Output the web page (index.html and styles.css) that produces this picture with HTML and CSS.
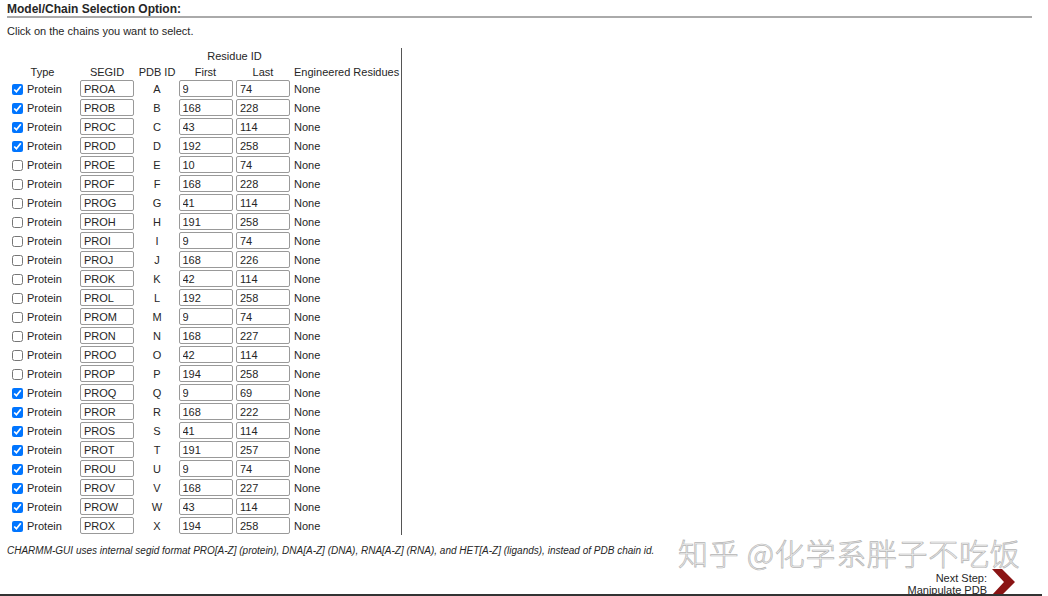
FILE: index.html
```html
<!DOCTYPE html>
<html>
<head>
<meta charset="utf-8">
<link rel="stylesheet" href="styles.css">
</head>
<body>
<div class="page">
  <h2 class="title">Model/Chain Selection Option:</h2>
  <p class="intro">Click on the chains you want to select.</p>
  <table class="chains">
    <colgroup>
      <col class="c-type"><col class="c-seg"><col class="c-pdb"><col class="c-first"><col class="c-last"><col class="c-eng">
    </colgroup>
    <thead>
      <tr class="h1"><th></th><th></th><th></th><th colspan="2">Residue ID</th><th></th></tr>
      <tr class="h2"><th>Type</th><th>SEGID</th><th>PDB ID</th><th>First</th><th>Last</th><th class="left">Engineered Residues</th></tr>
    </thead>
    <tbody>
      <tr><td class="type"><input type="checkbox" checked><span>Protein</span></td><td><input class="txt" value="PROA"></td><td class="pdb">A</td><td><input class="txt" value="9"></td><td><input class="txt" value="74"></td><td class="eng">None</td></tr>
      <tr><td class="type"><input type="checkbox" checked><span>Protein</span></td><td><input class="txt" value="PROB"></td><td class="pdb">B</td><td><input class="txt" value="168"></td><td><input class="txt" value="228"></td><td class="eng">None</td></tr>
      <tr><td class="type"><input type="checkbox" checked><span>Protein</span></td><td><input class="txt" value="PROC"></td><td class="pdb">C</td><td><input class="txt" value="43"></td><td><input class="txt" value="114"></td><td class="eng">None</td></tr>
      <tr><td class="type"><input type="checkbox" checked><span>Protein</span></td><td><input class="txt" value="PROD"></td><td class="pdb">D</td><td><input class="txt" value="192"></td><td><input class="txt" value="258"></td><td class="eng">None</td></tr>
      <tr><td class="type"><input type="checkbox"><span>Protein</span></td><td><input class="txt" value="PROE"></td><td class="pdb">E</td><td><input class="txt" value="10"></td><td><input class="txt" value="74"></td><td class="eng">None</td></tr>
      <tr><td class="type"><input type="checkbox"><span>Protein</span></td><td><input class="txt" value="PROF"></td><td class="pdb">F</td><td><input class="txt" value="168"></td><td><input class="txt" value="228"></td><td class="eng">None</td></tr>
      <tr><td class="type"><input type="checkbox"><span>Protein</span></td><td><input class="txt" value="PROG"></td><td class="pdb">G</td><td><input class="txt" value="41"></td><td><input class="txt" value="114"></td><td class="eng">None</td></tr>
      <tr><td class="type"><input type="checkbox"><span>Protein</span></td><td><input class="txt" value="PROH"></td><td class="pdb">H</td><td><input class="txt" value="191"></td><td><input class="txt" value="258"></td><td class="eng">None</td></tr>
      <tr><td class="type"><input type="checkbox"><span>Protein</span></td><td><input class="txt" value="PROI"></td><td class="pdb">I</td><td><input class="txt" value="9"></td><td><input class="txt" value="74"></td><td class="eng">None</td></tr>
      <tr><td class="type"><input type="checkbox"><span>Protein</span></td><td><input class="txt" value="PROJ"></td><td class="pdb">J</td><td><input class="txt" value="168"></td><td><input class="txt" value="226"></td><td class="eng">None</td></tr>
      <tr><td class="type"><input type="checkbox"><span>Protein</span></td><td><input class="txt" value="PROK"></td><td class="pdb">K</td><td><input class="txt" value="42"></td><td><input class="txt" value="114"></td><td class="eng">None</td></tr>
      <tr><td class="type"><input type="checkbox"><span>Protein</span></td><td><input class="txt" value="PROL"></td><td class="pdb">L</td><td><input class="txt" value="192"></td><td><input class="txt" value="258"></td><td class="eng">None</td></tr>
      <tr><td class="type"><input type="checkbox"><span>Protein</span></td><td><input class="txt" value="PROM"></td><td class="pdb">M</td><td><input class="txt" value="9"></td><td><input class="txt" value="74"></td><td class="eng">None</td></tr>
      <tr><td class="type"><input type="checkbox"><span>Protein</span></td><td><input class="txt" value="PRON"></td><td class="pdb">N</td><td><input class="txt" value="168"></td><td><input class="txt" value="227"></td><td class="eng">None</td></tr>
      <tr><td class="type"><input type="checkbox"><span>Protein</span></td><td><input class="txt" value="PROO"></td><td class="pdb">O</td><td><input class="txt" value="42"></td><td><input class="txt" value="114"></td><td class="eng">None</td></tr>
      <tr><td class="type"><input type="checkbox"><span>Protein</span></td><td><input class="txt" value="PROP"></td><td class="pdb">P</td><td><input class="txt" value="194"></td><td><input class="txt" value="258"></td><td class="eng">None</td></tr>
      <tr><td class="type"><input type="checkbox" checked><span>Protein</span></td><td><input class="txt" value="PROQ"></td><td class="pdb">Q</td><td><input class="txt" value="9"></td><td><input class="txt" value="69"></td><td class="eng">None</td></tr>
      <tr><td class="type"><input type="checkbox" checked><span>Protein</span></td><td><input class="txt" value="PROR"></td><td class="pdb">R</td><td><input class="txt" value="168"></td><td><input class="txt" value="222"></td><td class="eng">None</td></tr>
      <tr><td class="type"><input type="checkbox" checked><span>Protein</span></td><td><input class="txt" value="PROS"></td><td class="pdb">S</td><td><input class="txt" value="41"></td><td><input class="txt" value="114"></td><td class="eng">None</td></tr>
      <tr><td class="type"><input type="checkbox" checked><span>Protein</span></td><td><input class="txt" value="PROT"></td><td class="pdb">T</td><td><input class="txt" value="191"></td><td><input class="txt" value="257"></td><td class="eng">None</td></tr>
      <tr><td class="type"><input type="checkbox" checked><span>Protein</span></td><td><input class="txt" value="PROU"></td><td class="pdb">U</td><td><input class="txt" value="9"></td><td><input class="txt" value="74"></td><td class="eng">None</td></tr>
      <tr><td class="type"><input type="checkbox" checked><span>Protein</span></td><td><input class="txt" value="PROV"></td><td class="pdb">V</td><td><input class="txt" value="168"></td><td><input class="txt" value="227"></td><td class="eng">None</td></tr>
      <tr><td class="type"><input type="checkbox" checked><span>Protein</span></td><td><input class="txt" value="PROW"></td><td class="pdb">W</td><td><input class="txt" value="43"></td><td><input class="txt" value="114"></td><td class="eng">None</td></tr>
      <tr><td class="type"><input type="checkbox" checked><span>Protein</span></td><td><input class="txt" value="PROX"></td><td class="pdb">X</td><td><input class="txt" value="194"></td><td><input class="txt" value="258"></td><td class="eng">None</td></tr>
    </tbody>
  </table>
  <p class="note">CHARMM-GUI uses internal segid format PRO[A-Z] (protein), DNA[A-Z] (DNA), RNA[A-Z] (RNA), and HET[A-Z] (ligands), instead of PDB chain id.</p>
  <div class="next">
    <div class="next-text">Next Step:<br>Manipulate PDB</div>
    <svg class="chev" width="24" height="26" viewBox="0 0 24 26"><polygon points="0,0 10,0 23,13 10,26 0,26 12,13" fill="#8a1414"/></svg>
  </div>
  <div class="bottom-line"></div>
  <div class="watermark">知乎 @化学系胖子不吃饭</div>
</div>
</body>
</html>
```
FILE: styles.css
```css
html, body {
  margin: 0;
  padding: 0;
  background: #fff;
}
body {
  font-family: "Liberation Sans", Arial, sans-serif;
  color: #262626;
  width: 1048px;
  height: 596px;
  overflow: hidden;
}
.page {
  position: relative;
  height: 596px;
  display: flex;
  flex-direction: column;
}
.title {
  margin: 2px 16px 0 7px;
  font-size: 12px;
  font-weight: bold;
  line-height: 14px;
  padding-bottom: 0;
  border-bottom: 2px solid #aaa;
  height: 14px;
}
.intro {
  margin: 6px 0 0 7px;
  font-size: 11px;
  line-height: 14px;
}
.chains {
  margin: 10px 0 0 8px;
  border-collapse: collapse;
  table-layout: fixed;
  width: 393px;
  border-right: 1px solid #555;
  font-size: 11px;
}
.c-type { width: 69px; }
.c-seg { width: 60px; }
.c-pdb { width: 40px; }
.c-first { width: 57px; }
.c-last { width: 58px; }
.c-eng { width: 109px; }
.chains th {
  font-weight: normal;
  padding: 0;
  text-align: center;
  white-space: nowrap;
}
.chains th.left {
  text-align: left;
  padding-left: 2px;
}
.h1 th { height: 16px; line-height: 15px; vertical-align: bottom; }
.h2 th { height: 15px; line-height: 14px; vertical-align: bottom; }
.chains td {
  height: 19px;
  padding: 0;
  text-align: center;
  vertical-align: middle;
}
.chains td.type {
  text-align: left;
  white-space: nowrap;
}
.type input {
  width: 11px;
  height: 11px;
  margin: 0 4px 0 4px;
  vertical-align: -2px;
  accent-color: #0075ff;
}
.chains td.eng {
  text-align: left;
  padding-left: 2px;
}
.txt {
  width: 54px;
  height: 17px;
  box-sizing: border-box;
  border: 1px solid #999;
  border-radius: 2px;
  padding: 0 3px;
  font-family: "Liberation Sans", Arial, sans-serif;
  font-size: 11px;
  color: #262626;
  display: block;
  margin: 0 auto;
}
.note {
  margin: 9px 0 0 7px;
  font-size: 10px;
  font-style: italic;
  line-height: 13px;
}
.next {
  margin-top: 15px;
  margin-right: 32px;
  display: flex;
  justify-content: flex-end;
  align-items: flex-start;
}
.next-text {
  font-size: 11px;
  line-height: 12px;
  text-align: right;
  margin-right: 5px;
}
.chev {
  display: block;
  margin-top: -3px;
}
.bottom-line {
  position: absolute;
  left: 0;
  bottom: 0;
  width: 1042px;
  height: 2px;
  background: #333;
}
.watermark {
  position: absolute;
  left: 678px;
  top: 535px;
  font-family: "Noto Sans CJK SC", sans-serif;
  font-weight: 300;
  font-size: 30px;
  line-height: 34px;
  letter-spacing: 0.7px;
  color: #f2f2f2;
  -webkit-text-stroke: 0.7px #b5b5b5;
  white-space: nowrap;
}
```
